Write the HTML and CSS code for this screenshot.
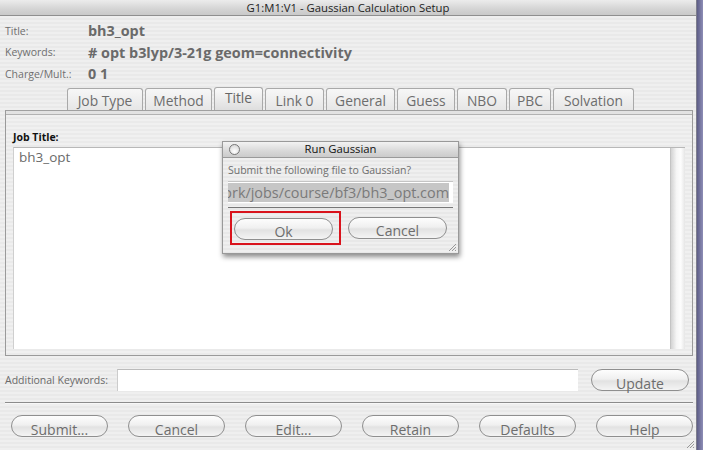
FILE: index.html
```html
<!DOCTYPE html>
<html>
<head>
<meta charset="utf-8">
<link rel="stylesheet" href="styles.css">
</head>
<body>
<div class="screen">
  <div class="window">
    <div class="titlebar">G1:M1:V1 - Gaussian Calculation Setup</div>
    <div class="info">
      <div class="info-row"><span class="lbl">Title:</span><span class="val">bh3_opt</span></div>
      <div class="info-row"><span class="lbl">Keywords:</span><span class="val"># opt b3lyp/3-21g geom=connectivity</span></div>
      <div class="info-row"><span class="lbl">Charge/Mult.:</span><span class="val">0 1</span></div>
    </div>
    <div class="tabs">
      <div class="tab w-job">Job Type</div>
      <div class="tab w-method">Method</div>
      <div class="tab active w-title">Title</div>
      <div class="tab w-link">Link 0</div>
      <div class="tab w-general">General</div>
      <div class="tab w-guess">Guess</div>
      <div class="tab w-nbo">NBO</div>
      <div class="tab w-pbc">PBC</div>
      <div class="tab w-solv">Solvation</div>
    </div>
    <div class="panel">
      <div class="panel-label">Job Title:</div>
      <div class="textarea">
        <div class="text-content">bh3_opt</div>
        <div class="scroll"></div>
      </div>
    </div>
    <div class="addl">
      <span class="addl-label">Additional Keywords:</span>
      <div class="addl-input"></div>
      <div class="btn btn-update">Update</div>
    </div>
    <div class="sep"></div>
    <div class="buttons">
      <div class="btn">Submit...</div>
      <div class="btn">Cancel</div>
      <div class="btn">Edit...</div>
      <div class="btn">Retain</div>
      <div class="btn">Defaults</div>
      <div class="btn">Help</div>
    </div>
    <svg class="grip" width="10" height="10" viewBox="0 0 10 10"><path d="M9 2 L2 9 M9 5 L5 9 M9 8 L8 9" stroke="#999" stroke-width="1"/></svg>

    <div class="dialog">
      <div class="dlg-title"><span class="dlg-circle"></span><span class="dlg-title-text">Run Gaussian</span></div>
      <div class="dlg-body">
        <div class="dlg-msg">Submit the following file to Gaussian?</div>
        <div class="dlg-field"><span class="dlg-path">/Users/student/work/jobs/course/bf3/bh3_opt.com</span></div>
        <div class="dlg-sep"></div>
        <div class="dlg-buttons">
          <div class="focus-ring"><div class="btn dlg-btn">Ok</div></div>
          <div class="btn dlg-btn">Cancel</div>
        </div>
      </div>
      <svg class="dlg-grip" width="9" height="9" viewBox="0 0 9 9"><path d="M8 1 L1 8 M8 4 L4 8 M8 7 L7 8" stroke="#999" stroke-width="1"/></svg>
    </div>
  </div>
  <div class="edge"></div>
</div>
</body>
</html>
```
FILE: styles.css
```css
* { box-sizing: border-box; }
html, body { margin: 0; padding: 0; }
body {
  width: 703px;
  height: 450px;
  overflow: hidden;
  font-family: "Open Sans", "DejaVu Sans", sans-serif;
  color: #6a6a6a;
}
.screen {
  display: flex;
  width: 703px;
  height: 450px;
}
.window {
  position: relative;
  width: 697px;
  height: 450px;
  background: repeating-linear-gradient(to bottom, #efefef 0, #efefef 2px, #e9e9e9 2px, #e9e9e9 4px);
  border-right: 1px solid #7d7d8c;
}
.edge {
  width: 6px;
  background: linear-gradient(to right, #5d5d86, #8d8db6);
}
.titlebar {
  height: 16px;
  line-height: 15px;
  text-align: center;
  font-size: 11.3px;
  color: #222;
  background: linear-gradient(to bottom, #ececec, #d4d4d4 60%, #c9c9c9);
  border-bottom: 1px solid #8f8f8f;
}
.info {
  padding: 4px 0 0 5px;
}
.info-row {
  display: flex;
  align-items: center;
  height: 21.5px;
}
.lbl {
  width: 83px;
  font-size: 10.5px;
  color: #6e6e6e;
}
.val {
  font-weight: bold;
  font-size: 14.4px;
  color: #6a6a6a;
}
.tabs {
  display: flex;
  gap: 2px;
  padding-left: 67px;
  margin-top: 2px;
  height: 23px;
  align-items: flex-end;
}
.tab {
  height: 22px;
  border: 1px solid #a9a9a9;
  border-bottom: none;
  border-radius: 3px 3px 0 0;
  background: linear-gradient(to bottom, #f7f7f7, #e6e6e6);
  font-size: 13.8px;
  color: #6d6d6d;
  text-align: center;
  line-height: 23px;
}
.tab.active {
  height: 23px;
  background: linear-gradient(to bottom, #fafafa, #dedede);
  line-height: 20px;
  color: #666;
}
.w-job { width: 76px; }
.w-method { width: 67px; }
.w-title { width: 49px; }
.w-link { width: 59px; }
.w-general { width: 69px; }
.w-guess { width: 58px; }
.w-nbo { width: 50px; }
.w-pbc { width: 42px; }
.w-solv { width: 81px; }
.panel {
  margin: 0 3px 0 5px;
  height: 246px;
  border: 1px solid #9a9a9a;
  border-top-color: #a0a0a0;
  background:
    linear-gradient(to bottom, #e2e2e2 0, #e2e2e2 3px, #b2b2b2 3px, #b2b2b2 4px, transparent 4px),
    repeating-linear-gradient(to bottom, #f0f0f0 0, #f0f0f0 2px, #eaeaea 2px, #eaeaea 4px);
  padding: 20px 7px 0 7px;
}
.panel-label {
  font-size: 10.5px;
  font-weight: bold;
  color: #111;
  height: 13px;
  line-height: 13px;
}
.textarea {
  display: flex;
  height: 202px;
  margin-top: 3px;
  border-top: 1px solid #b8b8b8;
  border-left: 1px solid #cfcfcf;
}
.text-content {
  flex: 1;
  background: #fff;
  font-size: 13.5px;
  color: #6a6a6a;
  padding: 0 0 0 5px;
}
.scroll {
  width: 15px;
  background: linear-gradient(to right, #d3d3d3, #f6f6f6 40%, #fdfdfd 70%, #e6e6e6);
  border-left: 1px solid #c4c4c4;
}
.addl {
  display: flex;
  align-items: center;
  height: 22px;
  margin-top: 13px;
  padding-left: 5px;
}
.addl-label {
  font-size: 10.5px;
  width: 112px;
  color: #6a6a6a;
}
.addl-input {
  width: 461px;
  height: 22px;
  background: #fff;
  border-top: 1px solid #bbb;
  border-left: 1px solid #ccc;
}
.btn {
  height: 22px;
  width: 98px;
  border: 1px solid #8f8f8f;
  border-radius: 11px;
  background: linear-gradient(to bottom, #fdfdfd, #f0f0f0 45%, #e2e2e2 55%, #f4f4f4);
  font-size: 14px;
  color: #6d6d6d;
  text-align: center;
  line-height: 27px;
}
.btn-update {
  margin-left: 13px;
}
.sep {
  margin: 11px 3px 0 5px;
  height: 2px;
  border-top: 1px solid #8c8c8c;
  border-bottom: 1px solid #f8f8f8;
}
.buttons {
  display: flex;
  gap: 20px;
  padding-left: 11px;
  margin-top: 11px;
}
.buttons .btn { width: 97px; }
.grip {
  position: absolute;
  right: 1px;
  bottom: 1px;
}
.dialog {
  position: absolute;
  left: 222px;
  top: 141px;
  width: 237px;
  height: 113px;
  background: repeating-linear-gradient(to bottom, #efefef 0, #efefef 2px, #e8e8e8 2px, #e8e8e8 4px);
  border: 1px solid #999;
  box-shadow: 1px 3px 5px rgba(0,0,0,0.45);
}
.dlg-title {
  position: relative;
  height: 16px;
  background: linear-gradient(to bottom, #f2f2f2, #d8d8d8 60%, #cbcbcb);
  border-bottom: 1px solid #9a9a9a;
  text-align: center;
  font-size: 11.3px;
  color: #111;
  line-height: 14px;
}
.dlg-circle {
  position: absolute;
  left: 6px;
  top: 2px;
  width: 11px;
  height: 11px;
  border-radius: 50%;
  border: 1px solid #777;
  background: radial-gradient(circle at 50% 70%, #fff, #d0d0d0);
}
.dlg-body {
  padding: 5px 5px 0 5px;
}
.dlg-msg {
  font-size: 10.5px;
  color: #6e6e6e;
  height: 15px;
  line-height: 14px;
}
.dlg-field {
  margin-top: 3px;
  height: 22px;
  width: 225px;
  background: #fff;
  border-top: 1px solid #c4c4c4;
  padding: 1px 4px 0 1px;
  overflow: hidden;
  display: flex;
  justify-content: flex-end;
}
.dlg-path {
  flex: none;
  background: #c6c6c6;
  font-size: 14.4px;
  color: #7a7a7a;
  line-height: 19px;
  height: 19px;
  white-space: nowrap;
}
.dlg-sep {
  margin-top: 4px;
  width: 225px;
  height: 1px;
  background: #777;
}
.dlg-buttons {
  display: flex;
  align-items: center;
  gap: 7px;
  margin-top: 3px;
}
.focus-ring {
  border: 2px solid #d9131c;
  padding: 5px 6px 3px 2px;
  margin-left: 2px;
}
.dlg-btn {
  width: 99px;
  height: 22px;
  line-height: 26px;
}
.dlg-grip {
  position: absolute;
  right: 1px;
  bottom: 1px;
}
```
